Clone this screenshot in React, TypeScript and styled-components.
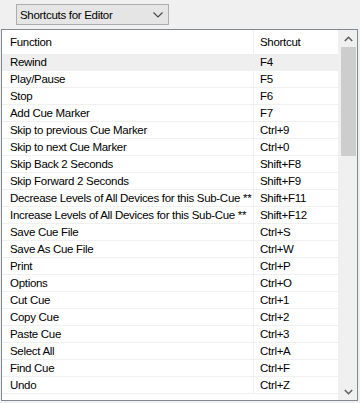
import styled, { createGlobalStyle } from "styled-components";

const GlobalStyle = createGlobalStyle`
  html, body {
    margin: 0;
    padding: 0;
    background: #f0f0f0;
  }
  body {
    font-family: "Liberation Sans", Arial, sans-serif;
    font-size: 11.5px;
    letter-spacing: -0.3px;
    color: #000;
  }
`;

const shortcuts: [string, string][] = [
  ["Rewind", "F4"],
  ["Play/Pause", "F5"],
  ["Stop", "F6"],
  ["Add Cue Marker", "F7"],
  ["Skip to previous Cue Marker", "Ctrl+9"],
  ["Skip to next Cue Marker", "Ctrl+0"],
  ["Skip Back 2 Seconds", "Shift+F8"],
  ["Skip Forward 2 Seconds", "Shift+F9"],
  ["Decrease Levels of All Devices for this Sub-Cue **", "Shift+F11"],
  ["Increase Levels of All Devices for this Sub-Cue **", "Shift+F12"],
  ["Save Cue File", "Ctrl+S"],
  ["Save As Cue File", "Ctrl+W"],
  ["Print", "Ctrl+P"],
  ["Options", "Ctrl+O"],
  ["Cut Cue", "Ctrl+1"],
  ["Copy Cue", "Ctrl+2"],
  ["Paste Cue", "Ctrl+3"],
  ["Select All", "Ctrl+A"],
  ["Find Cue", "Ctrl+F"],
  ["Undo", "Ctrl+Z"],
];

const App: React.FC = () => {
  return (
    <>
      <GlobalStyle />
      <Page>
        <Select>
          <span>Shortcuts for Editor</span>
          <svg width="10" height="6" viewBox="0 0 10 6">
            <path d="M0.5 0.5 L5 5 L9.5 0.5" fill="none" stroke="#444" strokeWidth="1.1" />
          </svg>
        </Select>

        <ListPanel>
          <ListBody>
            <HeaderRow>
              <Cell $first>Function</Cell>
              <Cell>Shortcut</Cell>
            </HeaderRow>
            {shortcuts.map(([name, key], i) => (
              <Row key={i} $hot={i === 0}>
                <Cell $first>{name}</Cell>
                <Cell>{key}</Cell>
              </Row>
            ))}
          </ListBody>

          <ScrollBar>
            <Arrow>
              <svg width="9" height="6" viewBox="0 0 9 6">
                <path d="M0.8 5 L4.5 1.3 L8.2 5" fill="none" stroke="#606060" strokeWidth="1.6" />
              </svg>
            </Arrow>
            <Track>
              <Thumb />
            </Track>
            <Arrow>
              <svg width="9" height="6" viewBox="0 0 9 6">
                <path d="M0.8 1 L4.5 4.7 L8.2 1" fill="none" stroke="#606060" strokeWidth="1.6" />
              </svg>
            </Arrow>
          </ScrollBar>
        </ListPanel>
      </Page>
    </>
  );
};

export default App;

const Page = styled.div`
  width: 360px;
  height: 403px;
  padding-top: 4px;
  box-sizing: border-box;
`;

const Select = styled.div`
  margin-left: 16px;
  width: 153px;
  height: 21px;
  box-sizing: border-box;
  background: #e5e5e5;
  border: 1px solid #adadad;
  display: flex;
  align-items: center;
  justify-content: space-between;
  padding: 0 5px 0 3px;
`;

const ListPanel = styled.div`
  margin: 4px 0 0 1px;
  width: 357px;
  height: 372px;
  box-sizing: border-box;
  border: 1px solid #828790;
  background: #fff;
  display: flex;
  overflow: hidden;
`;

const ListBody = styled.div`
  flex: 1;
  overflow: hidden;
  border-right: 2px solid #f0f0f0;
`;

const HeaderRow = styled.div`
  display: grid;
  grid-template-columns: 252px 1fr;
  height: 24px;

  & > div {
    display: flex;
    align-items: center;
  }
`;

const Row = styled.div<{ $hot?: boolean }>`
  display: grid;
  grid-template-columns: 252px 1fr;
  height: 17px;
  box-sizing: border-box;
  border-bottom: 1px solid #f0f0f0;
  background: ${(p) => (p.$hot ? "#efefef" : "#fff")};
  line-height: 16px;
`;

const Cell = styled.div<{ $first?: boolean }>`
  padding-left: ${(p) => (p.$first ? "8px" : "6px")};
  border-right: ${(p) => (p.$first ? "1px solid #f0f0f0" : "none")};
  white-space: nowrap;
  overflow: hidden;
`;

const ScrollBar = styled.div`
  width: 17px;
  background: #f0f0f0;
  display: flex;
  flex-direction: column;
`;

const Arrow = styled.div`
  height: 17px;
  display: flex;
  align-items: center;
  justify-content: center;
`;

const Track = styled.div`
  flex: 1;
  padding: 0 1px;
`;

const Thumb = styled.div`
  height: 109px;
  background: #cdcdcd;
`;
